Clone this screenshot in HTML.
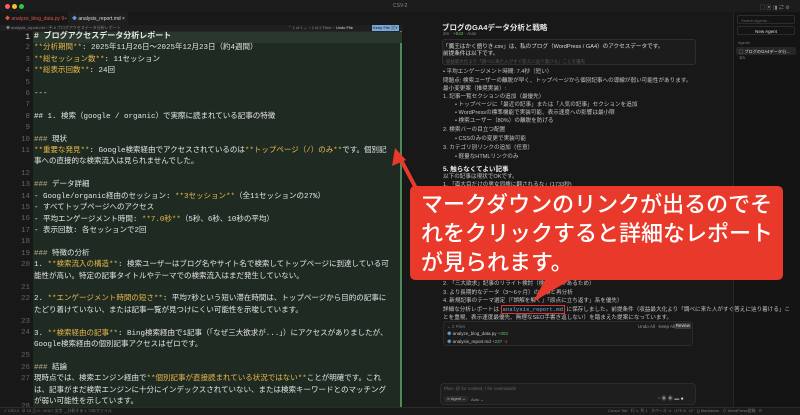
<!DOCTYPE html>
<html><head><meta charset="utf-8"><style>
*{margin:0;padding:0;box-sizing:border-box}
body{width:800px;height:415px;overflow:hidden;background:#141414;font-family:"Liberation Sans","Noto Sans CJK JP",sans-serif;color:#ccc;position:relative}
.abs{position:absolute}
.mono{font-family:"Liberation Mono","Noto Sans CJK JP",monospace}
#ed{left:33px;top:31px;width:369px;height:376px;background:#1f2b22;border-right:2px solid #4f8a5a}
.ln{position:absolute;left:0;width:30px;text-align:right;font-size:7.5px;color:#5c6660}
.tx{position:absolute;left:34px;font-size:7.5px;color:#e6e6e6;white-space:pre;line-height:11.4px;width:355px}
.y{color:#e8b94c}
.g{color:#b9a98a}
.r{font-size:5.6px;color:#c4c4c4;position:absolute;left:443px;white-space:nowrap}
.b{font-weight:bold}
</style></head><body>
<div class="abs" style="left:0;top:0;width:800px;height:12px;background:#1c1c1c"></div>
<div class="abs" style="left:5px;top:4px;width:5px;height:5px;border-radius:50%;background:#ff5f57"></div>
<div class="abs" style="left:12px;top:4px;width:5px;height:5px;border-radius:50%;background:#febc2e"></div>
<div class="abs" style="left:19px;top:4px;width:5px;height:5px;border-radius:50%;background:#28c840"></div>
<div class="abs" style="left:393px;top:3px;font-size:5px;color:#888">CSV-2</div>
<div class="abs" style="left:0;top:12px;width:403px;height:13px;background:#181818"></div>
<div class="abs" style="left:5px;top:15px;font-size:5px;color:#d4564c">◆ analyze_blog_data.py 9+</div>
<div class="abs" style="left:68px;top:12px;width:60px;height:13px;background:#1f1f1f"></div>
<div class="abs" style="left:72px;top:15px;font-size:5px;color:#ddd"><span style="color:#5a9bd5">◆</span> analysis_report.md ×</div>
<div class="abs" style="left:0;top:25px;width:403px;height:6px;background:#1f1f1f"></div>
<div class="abs" style="left:6px;top:25px;font-size:4px;color:#888">◆ analysis_report.md › ▣ # ブログアクセスデータ分析レポート</div>
<div class="abs" style="left:288px;top:25px;font-size:4px;color:#888">⌃ 1 of 1 ⌄ &nbsp;‹ 2 of 2 Files › &nbsp;<span style="color:#ddd">Undo File</span></div>
<div class="abs" style="left:372px;top:25px;width:27px;height:6px;background:#7aa7d9;font-size:4px;color:#111;padding-left:1px">Keep File ⌘Y</div>
<div class="abs" style="left:0;top:31px;width:33px;height:376px;background:#181818"></div>
<div id="ed" class="abs"></div>
<div class="abs" style="left:33px;top:32px;width:369px;height:11px;background:#2a372d"></div>
<div class="abs mono" style="left:0;top:31px;width:402px;height:376px">
<div class="ln" style="top:2px;color:#ddd;font-size:8px">1</div><div class="ln" style="top:13.4px">2</div><div class="ln" style="top:24.8px">3</div><div class="ln" style="top:36.2px">4</div><div class="ln" style="top:47.6px">5</div><div class="ln" style="top:59px">6</div><div class="ln" style="top:70.4px">7</div><div class="ln" style="top:81.8px">8</div><div class="ln" style="top:93.2px">9</div><div class="ln" style="top:104.6px">10</div><div class="ln" style="top:116px">11</div><div class="ln" style="top:138.8px">12</div><div class="ln" style="top:150.2px">13</div><div class="ln" style="top:161.6px">14</div><div class="ln" style="top:173px">15</div><div class="ln" style="top:184.4px">16</div><div class="ln" style="top:195.8px">17</div><div class="ln" style="top:207.2px">18</div><div class="ln" style="top:218.6px">19</div><div class="ln" style="top:230px">20</div><div class="ln" style="top:252.8px">21</div><div class="ln" style="top:264.2px">22</div><div class="ln" style="top:287px">23</div><div class="ln" style="top:298.4px">24</div><div class="ln" style="top:321.2px">25</div><div class="ln" style="top:332.6px">26</div><div class="ln" style="top:344px">27</div><div class="ln" style="top:372px">28</div>
<div class="tx" style="top:0px;white-space:normal"><span style="font-size:8px;font-weight:bold"># ブログアクセスデータ分析レポート</span><br><span class="y">**分析期間**</span>: 2025年11月26日〜2025年12月23日（約4週間）<br><span class="y">**総セッション数**</span>: 11セッション<br><span class="y">**総表示回数**</span>: 24回<br>&nbsp;<br>---<br>&nbsp;<br>## 1. 検索（google / organic）で実際に読まれている記事の特徴<br>&nbsp;<br><span class="g">###</span> 現状<br><span class="y">**重要な発見**</span>: Google検索経由でアクセスされているのは<span class="y">**トップページ（/）のみ**</span>です。個別記事への直接的な検索流入は見られませんでした。<br>&nbsp;<br><span class="g">###</span> データ詳細<br>- Google/organic経由のセッション: <span class="y">**3セッション**</span>（全11セッションの27%）<br>- すべてトップページへのアクセス<br>- 平均エンゲージメント時間: <span class="y">**7.0秒**</span>（5秒、6秒、10秒の平均）<br>- 表示回数: 各セッションで2回<br>&nbsp;<br><span class="g">###</span> 特徴の分析<br>1. <span class="y">**検索流入の構造**</span>: 検索ユーザーはブログ名やサイト名で検索してトップページに到達している可能性が高い。特定の記事タイトルやテーマでの検索流入はまだ発生していない。<br>&nbsp;<br>2. <span class="y">**エンゲージメント時間の短さ**</span>: 平均7秒という短い滞在時間は、トップページから目的の記事にたどり着けていない、または記事一覧が見つけにくい可能性を示唆しています。<br>&nbsp;<br>3. <span class="y">**検索経由の記事**</span>: Bing検索経由で1記事（「なぜ三大欲求が...」）にアクセスがありましたが、Google検索経由の個別記事アクセスはゼロです。<br>&nbsp;<br><span class="g">###</span> 結論<br>現時点では、検索エンジン経由で<span class="y">**個別記事が直接読まれている状況ではない**</span>ことが明確です。これは、記事がまだ検索エンジンに十分にインデックスされていない、または検索キーワードとのマッチングが弱い可能性を示しています。</div>
</div>
<div class="abs" style="left:0;top:407px;width:800px;height:8px;background:#1a1a1a;border-top:1px solid #2a2a2a"></div>
<div class="abs" style="left:4px;top:408px;font-size:4px;color:#777">✓ CSV-2 &nbsp;⊘ 13 ⚠ 0 &nbsp;⁄ 6/117 文字 &nbsp;⎵ 分析する 1 つのファイル</div>
<div class="abs" style="left:608px;top:408px;font-size:4px;color:#777">Cursor Tab &nbsp; 行 1, 列 1 &nbsp; スペース: 4 &nbsp; UTF-8 &nbsp; LF &nbsp; {} Markdown &nbsp; ⊙ WordPress投稿 &nbsp; ⟳</div>
<div class="abs" style="left:403px;top:12px;width:330px;height:395px;background:#181818"></div>
<div class="abs" style="left:733px;top:12px;width:67px;height:395px;background:#141414;border-left:1px solid #262626"></div>
<div class="abs" style="left:760px;top:4px;font-size:5px;color:#888">▢ ▣ ◨ ⇄ ⚙</div>
<div class="abs" style="left:737px;top:15px;width:58px;height:9px;border:1px solid #2c2c2c;border-radius:2px;font-size:4px;color:#666;padding:1.5px 3px">Search Agents...</div>
<div class="abs" style="left:737px;top:26px;width:58px;height:9px;border:1px solid #2c2c2c;border-radius:2px;font-size:4.5px;color:#ddd;text-align:center;padding-top:1.5px">New Agent</div>
<div class="abs" style="left:738px;top:41px;font-size:3.8px;color:#777">Agents</div>
<div class="abs" style="left:736px;top:47px;width:60px;height:8px;background:#262626;border-radius:2px;font-size:4.2px;color:#ddd;padding:1.5px 3px">▢ ブログのGA4データ分... <span style="color:#888">1m</span></div>
<div class="abs" style="left:442px;top:22px;font-size:7.5px;color:#e8e8e8;font-weight:bold">ブログのGA4データ分析と戦略</div>
<div class="abs" style="left:443px;top:31px;font-size:4.5px;color:#888">2m · <span style="color:#6cbf6c">+542</span> · Auto</div>
<div class="abs" style="left:442px;top:39px;width:254px;height:26px;border:1px solid #2e2e2e;border-radius:3px;background:#1c1c1c"></div>
<div class="r" style="top:42px;color:#ddd">「魔王はかく語りき.csv」は、私のブログ（WordPress / GA4）のアクセスデータです。</div>
<div class="r" style="top:49px;color:#ddd">前提条件は以下です。</div>
<div class="r" style="top:59px;color:#555;font-size:4.5px">- 収益最大化より「調べに来た人がすぐ答えに辿り着ける」ことを優先</div>
<div class="r" style="top:67px">• 平均エンゲージメント時間: 7.4秒（短い）</div>
<div class="r" style="top:76px">問題点: 検索ユーザーの離脱が早く、トップページから個別記事への導線が弱い可能性があります。</div>
<div class="r" style="top:84px">最小変更案（推奨実装）:</div>
<div class="r" style="top:92px">1. 記事一覧セクションの追加（最優先）</div>
<div class="r" style="top:100px;left:455px">• トップページに「最近の記事」または「人気の記事」セクションを追加</div>
<div class="r" style="top:108px;left:455px">• WordPressの標準機能で実装可能、表示速度への影響は最小限</div>
<div class="r" style="top:116px;left:455px">• 検索ユーザー（80%）の離脱を防げる</div>
<div class="r" style="top:125px">2. 検索バーの目立つ配置</div>
<div class="r" style="top:134px;left:455px">• CSSのみの変更で実装可能</div>
<div class="r" style="top:143px">3. カテゴリ別リンクの追加（任意）</div>
<div class="r" style="top:152px;left:455px">• 軽量なHTMLリンクのみ</div>
<div class="r b" style="top:163px;font-size:6.5px;color:#eee">5. 触らなくてよい記事</div>
<div class="r" style="top:172px">以下の記事は現状でOKです。</div>
<div class="r" style="top:180px">1. 「直大目だけの男女同権に翻されるな」(1733秒)</div>
<div class="r" style="top:279px">2. 「三大欲求」記事のリライト検討（検索経由があるため）</div>
<div class="r" style="top:288px">3. より長期的なデータ（3〜6ヶ月）の収集と再分析</div>
<div class="r" style="top:296px">4. 新規記事のテーマ選定（「誤解を解く」「原点に立ち返す」系を優先）</div>
<div class="r" style="top:305px">詳細な分析レポートは <span style="border:1px solid #d33;color:#7aa7d9;font-family:'Liberation Mono',monospace;padding:0 1px">analysis_report.md</span> に保存しました。前提条件（収益最大化より「調べに来た人がすぐ答えに辿り着ける」こ</div>
<div class="r" style="top:313px">とを重視、表示速度最優先、無理なSEO手書き返しない）を踏まえた提案になっています。</div>
<div class="abs" style="left:443px;top:321px;width:250px;height:25px;border:1px solid #2a2a2a;border-radius:3px;background:#1b1b1b"></div>
<div class="r" style="top:324px;left:447px;color:#777;font-size:4.5px">⌄ 2 Files</div>
<div class="r" style="top:324px;left:638px;color:#999;font-size:4.5px">Undo All &nbsp; Keep All</div>
<div class="abs" style="left:675px;top:323px;width:16px;height:6px;background:#3a3a3a;border-radius:1px;font-size:4.2px;color:#ddd;padding-left:1px">Review</div>
<div class="r" style="top:331px;left:447px;font-size:4.5px"><span style="color:#5a9bd5">◆</span> analyze_blog_data.py <span style="color:#6cbf6c">+303</span></div>
<div class="r" style="top:339px;left:447px;font-size:4.5px"><span style="color:#5a9bd5">◆</span> analysis_report.md <span style="color:#6cbf6c">+237</span> <span style="color:#d55">-1</span></div>
<div class="abs" style="left:440px;top:383px;width:256px;height:22px;border:1px solid #2c2c2c;border-radius:4px;background:#1e1e1e"></div>
<div class="r" style="top:386px;left:444px;color:#666;font-size:4.5px">Plan, @ for context, / for commands</div>
<div class="abs" style="left:444px;top:396px;width:24px;height:6px;background:#2c2c2c;border-radius:3px;font-size:4px;color:#bbb;padding-left:3px">∞ Agent ⌄</div>
<div class="r" style="top:397px;left:471px;color:#999;font-size:4px">Auto ⌄</div>
<div class="r" style="top:395px;left:657px;color:#888;font-size:5px">◔ ◉ ◉ ▬ <span style="color:#ddd">●</span></div>
<svg class="abs" style="left:0;top:0" width="800" height="415">
<line x1="418" y1="192" x2="400" y2="158" stroke="#e8392a" stroke-width="4"/>
<polygon points="395,148 392,166 406,160" fill="#e8392a"/>
<path d="M415 186 H777 Q783 186 783 192 V274 Q783 280 777 280 H570 L533 302 L545 280 H416 Q410 280 410 274 V192 Q410 186 415 186 Z" fill="#e8392a"/>
</svg>
<div class="abs" style="left:421px;top:189px;font-size:22px;line-height:29px;color:#fff;font-family:'Noto Sans CJK JP',sans-serif;white-space:nowrap;font-weight:500">マークダウンのリンクが出るのでそ<br>れをクリックすると詳細なレポート<br>が見られます。</div>
</body></html>
